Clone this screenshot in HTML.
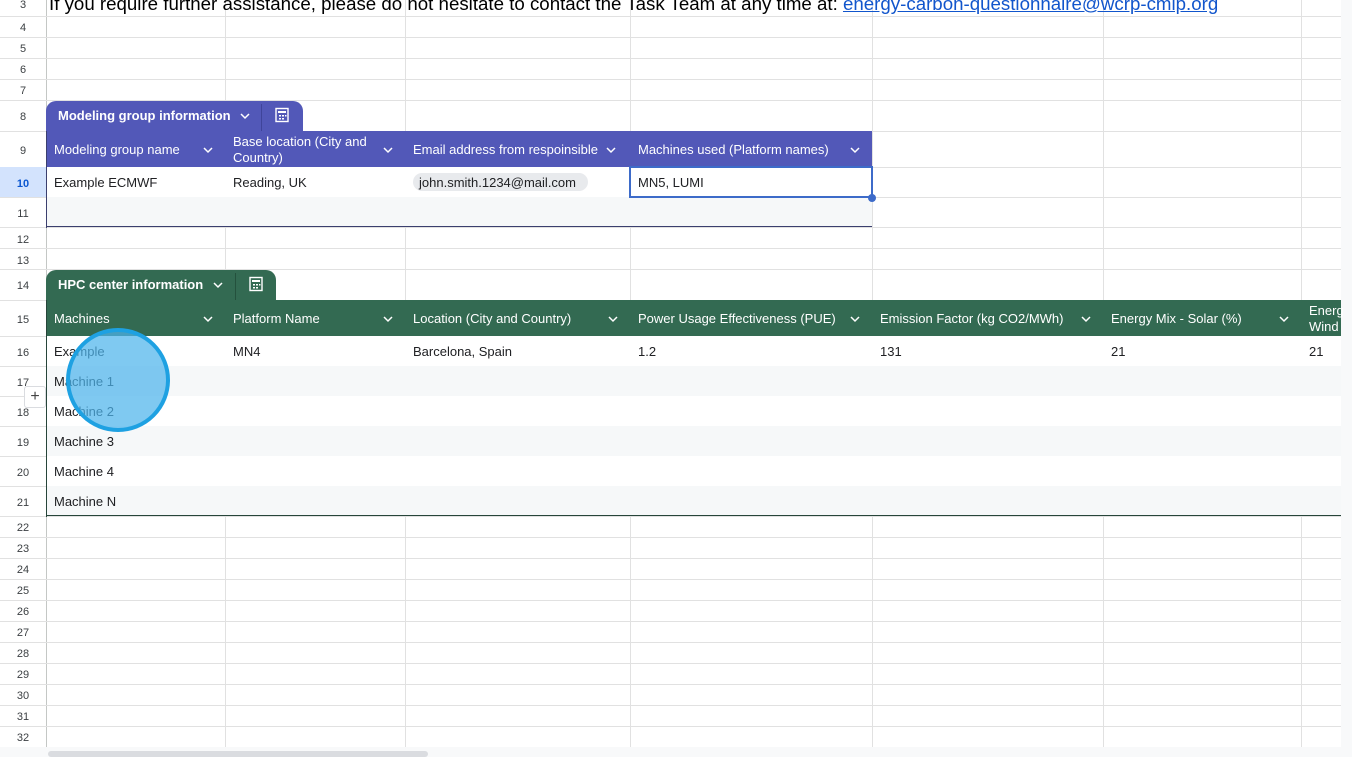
<!DOCTYPE html>
<html><head><meta charset="utf-8"><style>
*{margin:0;padding:0;box-sizing:border-box}
body{width:1352px;height:757px;overflow:hidden;background:#fff;position:relative;font-family:"Liberation Sans",Arial,sans-serif;color:#202124}
.a{position:absolute}
.h{position:absolute;left:0;width:1341px;height:1px;background:#e1e1e1}
.v{position:absolute;top:0;width:1px;height:747px;background:#e1e1e1}
.rn{position:absolute;left:0;width:46px;text-align:center;font-size:11px;color:#3c4043;margin-top:3px}
.t{position:absolute;font-size:13px;white-space:nowrap}
.hd{position:absolute;font-size:13px;color:#fff;white-space:nowrap}
</style></head><body>
<div class="v" style="left:46px;background:#c4c7c5"></div>
<div class="v" style="left:225px"></div><div class="v" style="left:405px"></div><div class="v" style="left:630px"></div><div class="v" style="left:872px"></div><div class="v" style="left:1103px"></div><div class="v" style="left:1301px"></div><div class="v" style="left:1341px"></div>
<div class="h" style="top:16px"></div><div class="h" style="top:37px"></div><div class="h" style="top:58px"></div><div class="h" style="top:79px"></div><div class="h" style="top:100px"></div><div class="h" style="top:131px"></div><div class="h" style="top:167px"></div><div class="h" style="top:197px"></div><div class="h" style="top:227px"></div><div class="h" style="top:248px"></div><div class="h" style="top:269px"></div><div class="h" style="top:300px"></div><div class="h" style="top:336px"></div><div class="h" style="top:366px"></div><div class="h" style="top:396px"></div><div class="h" style="top:426px"></div><div class="h" style="top:456px"></div><div class="h" style="top:486px"></div><div class="h" style="top:516px"></div><div class="h" style="top:537px"></div><div class="h" style="top:558px"></div><div class="h" style="top:579px"></div><div class="h" style="top:600px"></div><div class="h" style="top:621px"></div><div class="h" style="top:642px"></div><div class="h" style="top:663px"></div><div class="h" style="top:684px"></div><div class="h" style="top:705px"></div><div class="h" style="top:726px"></div><div class="h" style="top:747px"></div>
<div class="a" style="left:1341px;top:0;width:11px;height:757px;background:#f8f9fa"></div>
<div class="a" style="left:0;top:747px;width:1352px;height:10px;background:#f8f9fa"></div>
<div class="a" style="left:48px;top:751px;width:380px;height:6px;background:#dadce0;border-radius:3px"></div>
<div class="a" style="left:0;top:167px;width:46px;height:30px;background:#d3e3fd"></div>
<div class="rn" style="top:-4px">3</div>
<div class="rn" style="top:19px">4</div><div class="rn" style="top:40px">5</div><div class="rn" style="top:61px">6</div><div class="rn" style="top:82px">7</div><div class="rn" style="top:108px">8</div><div class="rn" style="top:142px">9</div><div class="rn" style="top:175px;font-weight:bold;color:#0b57d0">10</div><div class="rn" style="top:205px">11</div><div class="rn" style="top:231px">12</div><div class="rn" style="top:252px">13</div><div class="rn" style="top:277px">14</div><div class="rn" style="top:311px">15</div><div class="rn" style="top:344px">16</div><div class="rn" style="top:374px">17</div><div class="rn" style="top:404px">18</div><div class="rn" style="top:434px">19</div><div class="rn" style="top:464px">20</div><div class="rn" style="top:494px">21</div><div class="rn" style="top:519px">22</div><div class="rn" style="top:540px">23</div><div class="rn" style="top:561px">24</div><div class="rn" style="top:582px">25</div><div class="rn" style="top:603px">26</div><div class="rn" style="top:624px">27</div><div class="rn" style="top:645px">28</div><div class="rn" style="top:666px">29</div><div class="rn" style="top:687px">30</div><div class="rn" style="top:708px">31</div><div class="rn" style="top:729px">32</div>
<div class="t" style="left:49px;top:-7px;font-size:18.7px;color:#000">If you require further assistance, please do not hesitate to contact the Task Team at any time at: <span style="color:#1155cc;text-decoration:underline">energy-carbon-questionnaire@wcrp-cmip.org</span></div>

<div class="a" style="left:46px;top:101px;width:257px;height:30px;background:#5258b8;border-radius:10px 10px 0 0"></div>
<div class="a" style="left:261px;top:104px;width:1px;height:27px;background:#3f449a"></div>
<div class="hd" style="left:58px;top:108px;font-weight:bold">Modeling group information</div>
<svg class="a" style="left:239px;top:112px" width="12" height="8"><path d="M2 2l4 4 4-4" stroke="#fff" stroke-width="1.5" fill="none"/></svg>
<svg class="a" style="left:274px;top:107px" width="16" height="16"><rect x="2" y="1.5" width="12" height="13" fill="none" stroke="#fff" stroke-width="1.4"/><rect x="4" y="4" width="8" height="2" fill="#fff"/><rect x="5" y="8" width="2" height="1.5" fill="#fff"/><rect x="8" y="8" width="2" height="1.5" fill="#fff"/><rect x="11" y="8" width="1.5" height="1.5" fill="#fff"/><rect x="5" y="11" width="2" height="1.5" fill="#fff"/><rect x="8" y="11" width="2" height="1.5" fill="#fff"/></svg>
<div class="a" style="left:46px;top:131px;width:826px;height:36px;background:#5258b8"></div>
<div class="hd" style="left:54px;top:142px">Modeling group name</div>
<div class="hd" style="left:233px;top:134px;line-height:16px">Base location (City and<br>Country)</div>
<div class="hd" style="left:413px;top:142px">Email address from respoinsible</div>
<div class="hd" style="left:638px;top:142px">Machines used (Platform names)</div>
<svg class="a" style="left:202px;top:146px" width="12" height="8"><path d="M2 2l4 4 4-4" stroke="#fff" stroke-width="1.5" fill="none"/></svg>
<svg class="a" style="left:382px;top:146px" width="12" height="8"><path d="M2 2l4 4 4-4" stroke="#fff" stroke-width="1.5" fill="none"/></svg>
<svg class="a" style="left:605px;top:146px" width="12" height="8"><path d="M2 2l4 4 4-4" stroke="#fff" stroke-width="1.5" fill="none"/></svg>
<svg class="a" style="left:849px;top:146px" width="12" height="8"><path d="M2 2l4 4 4-4" stroke="#fff" stroke-width="1.5" fill="none"/></svg>
<div class="a" style="left:46px;top:167px;width:826px;height:30px;background:#fff"></div>
<div class="a" style="left:46px;top:197px;width:826px;height:30px;background:#f6f8f9;border-bottom:1px solid #3b3f6e"></div>
<div class="a" style="left:46px;top:131px;width:1px;height:97px;background:#3b3f6e"></div>
<div class="t" style="left:54px;top:175px">Example ECMWF</div>
<div class="t" style="left:233px;top:175px">Reading, UK</div>
<div class="a" style="left:413px;top:173px;width:175px;height:18px;background:#e8eaed;border-radius:9px"></div>
<div class="t" style="left:419px;top:175px">john.smith.1234@mail.com</div>
<div class="a" style="left:629px;top:166px;width:244px;height:32px;border:2px solid #3d6bc9"></div>
<div class="t" style="left:638px;top:175px">MN5, LUMI</div>
<div class="a" style="left:868px;top:194px;width:8px;height:8px;border-radius:50%;background:#3d6bc9"></div>

<div class="a" style="left:46px;top:270px;width:230px;height:30px;background:#336a52;border-radius:10px 10px 0 0"></div>
<div class="a" style="left:235px;top:273px;width:1px;height:27px;background:#24513d"></div>
<div class="hd" style="left:58px;top:277px;font-weight:bold">HPC center information</div>
<svg class="a" style="left:212px;top:281px" width="12" height="8"><path d="M2 2l4 4 4-4" stroke="#fff" stroke-width="1.5" fill="none"/></svg>
<svg class="a" style="left:248px;top:276px" width="16" height="16"><rect x="2" y="1.5" width="12" height="13" fill="none" stroke="#fff" stroke-width="1.4"/><rect x="4" y="4" width="8" height="2" fill="#fff"/><rect x="5" y="8" width="2" height="1.5" fill="#fff"/><rect x="8" y="8" width="2" height="1.5" fill="#fff"/><rect x="11" y="8" width="1.5" height="1.5" fill="#fff"/><rect x="5" y="11" width="2" height="1.5" fill="#fff"/><rect x="8" y="11" width="2" height="1.5" fill="#fff"/></svg>
<div class="a" style="left:46px;top:300px;width:1295px;height:36px;background:#336a52"></div>
<div class="hd" style="left:54px;top:311px">Machines</div>
<div class="hd" style="left:233px;top:311px">Platform Name</div>
<div class="hd" style="left:413px;top:311px">Location (City and Country)</div>
<div class="hd" style="left:638px;top:311px">Power Usage Effectiveness (PUE)</div>
<div class="hd" style="left:880px;top:311px">Emission Factor (kg CO2/MWh)</div>
<div class="hd" style="left:1111px;top:311px">Energy Mix - Solar (%)</div>
<div class="hd" style="left:1309px;top:303px;line-height:16px">Energ<br>Wind</div>
<svg class="a" style="left:202px;top:315px" width="12" height="8"><path d="M2 2l4 4 4-4" stroke="#fff" stroke-width="1.5" fill="none"/></svg>
<svg class="a" style="left:382px;top:315px" width="12" height="8"><path d="M2 2l4 4 4-4" stroke="#fff" stroke-width="1.5" fill="none"/></svg>
<svg class="a" style="left:607px;top:315px" width="12" height="8"><path d="M2 2l4 4 4-4" stroke="#fff" stroke-width="1.5" fill="none"/></svg>
<svg class="a" style="left:849px;top:315px" width="12" height="8"><path d="M2 2l4 4 4-4" stroke="#fff" stroke-width="1.5" fill="none"/></svg>
<svg class="a" style="left:1080px;top:315px" width="12" height="8"><path d="M2 2l4 4 4-4" stroke="#fff" stroke-width="1.5" fill="none"/></svg>
<svg class="a" style="left:1278px;top:315px" width="12" height="8"><path d="M2 2l4 4 4-4" stroke="#fff" stroke-width="1.5" fill="none"/></svg>
<div class="a" style="left:46px;top:336px;width:1295px;height:30px;background:#fff"></div>
<div class="a" style="left:46px;top:366px;width:1295px;height:30px;background:#f6f8f9"></div>
<div class="a" style="left:46px;top:396px;width:1295px;height:30px;background:#fff"></div>
<div class="a" style="left:46px;top:426px;width:1295px;height:30px;background:#f6f8f9"></div>
<div class="a" style="left:46px;top:456px;width:1295px;height:30px;background:#fff"></div>
<div class="a" style="left:46px;top:486px;width:1295px;height:30px;background:#f6f8f9;border-bottom:1px solid #27453a"></div>
<div class="a" style="left:46px;top:300px;width:1px;height:217px;background:#27453a"></div>
<div class="t" style="left:54px;top:344px">Example</div>
<div class="t" style="left:233px;top:344px">MN4</div>
<div class="t" style="left:413px;top:344px">Barcelona, Spain</div>
<div class="t" style="left:638px;top:344px">1.2</div>
<div class="t" style="left:880px;top:344px">131</div>
<div class="t" style="left:1111px;top:344px">21</div>
<div class="t" style="left:1309px;top:344px">21</div>
<div class="t" style="left:54px;top:374px">Machine 1</div>
<div class="t" style="left:54px;top:404px">Machine 2</div>
<div class="t" style="left:54px;top:434px">Machine 3</div>
<div class="t" style="left:54px;top:464px">Machine 4</div>
<div class="t" style="left:54px;top:494px">Machine N</div>
<div class="a" style="left:24px;top:386px;width:22px;height:22px;background:#fff;border:1px solid #dadce0;border-radius:3px;font-size:16px;line-height:19px;text-align:center;color:#444">+</div>
<div class="a" style="left:66px;top:328px;width:104px;height:104px;border-radius:50%;background:rgba(78,180,235,0.72);border:4px solid #1ea1e2"></div>
</body></html>
